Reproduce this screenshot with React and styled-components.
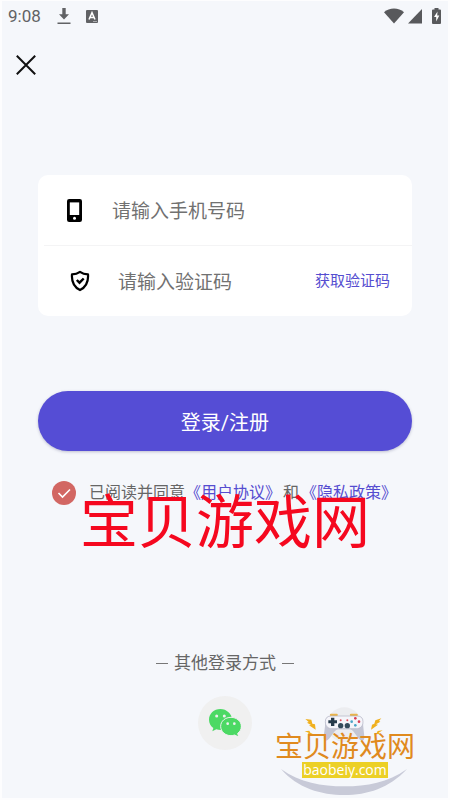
import React, { useState } from 'react';
import styled, { createGlobalStyle } from 'styled-components';

function App() {
  const [phone, setPhone] = useState('');
  const [code, setCode] = useState('');
  const [agreed, setAgreed] = useState(true);

  return (
    <Page>
      <GlobalStyle />

      <StatusBar>
        <Clock>9:08</Clock>
        <DownloadIcon />
        <KeyboardIcon />
        <Signals>
          <WifiIcon />
          <CellIcon />
          <BatteryIcon />
        </Signals>
      </StatusBar>

      <NavBar>
        <CloseButton type="button" aria-label="关闭">
          <CloseIcon />
        </CloseButton>
      </NavBar>

      <Form onSubmit={e => e.preventDefault()}>
        <Fields>
          <Field>
            <IconLabel htmlFor="phone" aria-label="手机号码"><PhoneIcon /></IconLabel>
            <Input
              id="phone"
              type="tel"
              placeholder="请输入手机号码"
              value={phone}
              onChange={e => setPhone(e.target.value)}
            />
          </Field>

          <Field $divided>
            <IconLabel htmlFor="code" aria-label="验证码"><ShieldIcon /></IconLabel>
            <Input
              id="code"
              type="text"
              placeholder="请输入验证码"
              value={code}
              onChange={e => setCode(e.target.value)}
            />
            <CodeButton type="button">获取验证码</CodeButton>
          </Field>
        </Fields>

        <SubmitButton type="submit">登录/注册</SubmitButton>

        <Agreement>
          <Checkbox>
            <input
              id="agree"
              type="checkbox"
              checked={agreed}
              onChange={e => setAgreed(e.target.checked)}
            />
            <svg width="24" height="24" viewBox="0 0 24 24" fill="none">
              <path d="M6.500 12l4 4 7.500-7.500" stroke="#fff" strokeWidth="1.600" />
            </svg>
          </Checkbox>
          <p>
            <label htmlFor="agree">已阅读并同意</label>
            <a href="#terms">《用户协议》</a>
            <span>和</span>
            <a href="#privacy">《隐私政策》</a>
          </p>
          <Watermark>宝贝游戏网</Watermark>
        </Agreement>
      </Form>

      <OtherLogin>
        <OtherTitle>
          <i />其他登录方式<i />
        </OtherTitle>
        <WechatButton type="button" aria-label="微信登录">
          <WechatIcon />
        </WechatButton>
      </OtherLogin>

      <SiteLogo>
        <LogoArt />
        <LogoName>宝贝游戏网</LogoName>
        <LogoUrl>baobeiy.com</LogoUrl>
      </SiteLogo>
    </Page>
  )
}

export default App;

const DownloadIcon = () => (
  <svg width="14" height="18" viewBox="0 0 14 18" fill="#616265">
    <path d="M5.300 1h3.400v6.300h3.300L7 12.500 2 7.300h3.300zM.5 15.500h13V17H.5z" />
  </svg>
)

const KeyboardIcon = () => (
  <svg width="12" height="14" viewBox="0 0 12 14">
    <rect y="1" width="12" height="13" rx="1" fill="#616265" />
    <path d="M3 10.500L6 3.600l3 6.900M4 8.500h4" fill="none" stroke="#fff" strokeWidth="1.500" />
    <path d="M7 12.500h4" stroke="#aaabae" strokeWidth="1" />
  </svg>
)

const WifiIcon = () => (
  <svg width="20" height="16" viewBox="0 0 20 16" fill="#58595c">
    <path d="M0 4.200Q4.300.6 10 .6t10 3.600L10 15.600z" />
  </svg>
)

const CellIcon = () => (
  <svg width="14" height="16" viewBox="0 0 14 16" fill="#58595c">
    <path d="M14 1v14.500H0z" />
  </svg>
)

const BatteryIcon = () => (
  <svg width="9" height="16" viewBox="0 0 9 16">
    <path d="M2.500 0h4v1.500H8q1 0 1 1V15q0 1-1 1H1q-1 0-1-1V2.500q0-1 1-1h1.500z" fill="#58595c" />
    <path d="M5.500 3.500L2 9h2.200v4.500L7.300 7.500H5.200z" fill="#fff" />
  </svg>
)

const CloseIcon = () => (
  <svg width="20" height="20" viewBox="0 0 20 20">
    <path d="M.8.800l18.400 18.400M19.200.8L.8 19.200" stroke="#111" strokeWidth="2" />
  </svg>
)

const PhoneIcon = () => (
  <svg width="15" height="23" viewBox="0 0 15 23">
    <rect width="15" height="23" rx="2.200" fill="#000" />
    <rect x="2.800" y="3.400" width="9.400" height="12.600" fill="#fff" />
    <circle cx="7.500" cy="19.300" r="1.500" fill="#fff" />
  </svg>
)

const ShieldIcon = () => (
  <svg width="20" height="22" viewBox="0 0 20 22" fill="none" stroke="#000">
    <path d="M10 1.900q3.300 2.300 8 2.500c.6 7.500-1.800 12.500-8 15.700C3.800 16.900 1.400 11.900 2 4.400q4.700-.2 8-2.500z" strokeWidth="2.200" strokeLinejoin="round" />
    <path d="M6.800 10l2.700 2.700 4.200-4.200" strokeWidth="2.400" />
  </svg>
)

const WechatIcon = () => (
  <svg width="32" height="28" viewBox="0 0 96 84">
    <path d="M34 0C15 0 0 14 0 32c0 10 5 19 13 25l-3 10 12-6c4 1.500 8 2 13 2 19 0 34-14 34-31S53 0 34 0z" fill="#4cd964" />
    <path d="M66 25c17 0 31 12 31 27 0 9-4 16-11 21l3 11-12-6c-4 1-7 2-11 2-17 0-31-12-31-28s14-27 31-27z" fill="#4cd964" stroke="#f0f0f0" strokeWidth="3" />
    <g fill="#f0f0f0">
      <circle cx="23" cy="21" r="4.500" />
      <circle cx="46" cy="21" r="4.500" />
      <circle cx="56" cy="44" r="4" />
      <circle cx="76" cy="44" r="4" />
    </g>
  </svg>
)

const LogoArt = () => (
  <svg width="160" height="100" viewBox="0 0 480 300">
    <circle cx="238" cy="74" r="52" fill="#ecedf0" />
    <path d="M48 207C105 248 170 259 238 259s130-11 188-52c-54 58-118 78-188 78S98 265 48 207z" fill="#c8cad8" />
    {/* gamepad */}
    <path d="M198 45h17M258 45h17" stroke="#e9b44b" strokeWidth="7" strokeLinecap="round" />
    <path d="M181 65q0-17 18-17h77q18 0 18 17c0 16 4 36 4 50q-2 11-12 5c-12-9-18-28-30-32h-38c-12 4-18 23-30 32q-10 6-12-5c0-14 5-34 5-50z" fill="#c4c6d4" />
    <path d="M181 65q0-17 18-17h77q18 0 18 17c0 15-9 21-20 21h-73c-13 0-20-8-20-21z" fill="#f5f5fa" stroke="#b0b2c2" strokeWidth="2" />
    <path d="M198 53h10v8h8v9h-8v8h-10v-8h-8v-9h8z" fill="#263b4b" />
    <circle cx="227" cy="77" r="8" fill="#344b5b" />
    <circle cx="247" cy="77" r="8" fill="#344b5b" />
    <circle cx="227" cy="61" r="3" fill="#e24e5a" />
    <circle cx="247" cy="61" r="3" fill="#e24e5a" />
    <circle cx="271" cy="55" r="4" fill="#d93c54" />
    <circle cx="282" cy="65" r="4" fill="#d93c54" />
    <circle cx="271" cy="76" r="4" fill="#4ba5c7" />
    <circle cx="260" cy="65" r="4" fill="#4ba5c7" />
    {/* sparks */}
    <g fill="#f0b01e">
      <path d="M121 57l18 2 3 12 8 2 2 16-20-13 6-1-12-7 5-2z" />
      <path d="M119 94l14-2 3 6 9 5-16-1 2-4z" />
      <path d="M349 55l-18 6-3 10-7 3-3 15 21-15-6-1 13-8-4-2z" />
      <path d="M353 91l-15 2-3 6-9 4 17-1-2-4z" />
    </g>
  </svg>
)

const GlobalStyle = createGlobalStyle`
  * {
    box-sizing: border-box;
  }

  body {
    margin: 0;
    font-family: Roboto, "Noto Sans CJK SC", sans-serif;
    color: #666;
    background: #fff;
  }

  button, input {
    font-family: inherit;
    border: none;
    padding: 0;
    background: transparent;
  }

  button {
    cursor: pointer;
  }

  svg {
    display: block;
  }
`

const Page = styled.main`
  position: relative;
  min-height: 100vh;
  display: flex;
  flex-direction: column;
  background: #f5f7fb;
  border: 2px solid #fdfdfe;
  border-top-width: 1px;
  overflow: hidden;
`

const StatusBar = styled.header`
  display: flex;
  align-items: center;
  height: 29px;
  padding: 0 7px 0 6px;
`

const Clock = styled.span`
  margin-right: 16px;
  font-size: 17px;
  line-height: 20px;
  color: #616265;

  & + svg {
    margin-right: 15px;
  }
`

const Signals = styled.div`
  display: flex;
  align-items: center;
  gap: 4px;
  margin-left: auto;

  svg:last-child {
    margin-left: 6px;
  }
`

const NavBar = styled.nav`
  display: flex;
  align-items: center;
  height: 70px;
  padding: 0 14px;
`

const CloseButton = styled.button`
  width: 20px;
  height: 20px;
`

const Form = styled.form`
  padding: 75px 36px 0;
`

const Fields = styled.div`
  border-radius: 10px;
  background: #fff;
`

const Field = styled.div`
  display: flex;
  align-items: center;
  height: ${props => props.$divided ? '71px' : '70px'};
  margin-left: ${props => props.$divided ? '6px' : '0'};
  padding: 0 22px 0 24px;
  border-top: ${props => props.$divided ? '1px solid #f4f4f5' : 'none'};
`

const IconLabel = styled.label`
  display: flex;
  justify-content: center;
  flex: none;
  width: 24px;
  margin-right: 26px;
`

const Input = styled.input`
  flex: 1;
  min-width: 0;
  height: 42px;
  padding-top: 2px;
  font-size: 19px;
  color: #333;
  outline: none;

  &::placeholder {
    color: #717171;
    opacity: 1;
  }
`

const CodeButton = styled.button`
  flex: none;
  font-size: 15px;
  line-height: 20px;
  color: #554dd0;
`

const SubmitButton = styled.button`
  display: block;
  width: 100%;
  height: 60px;
  margin-top: 75px;
  border-radius: 30px;
  font-size: 20px;
  color: #fff;
  background: #554dd5;
  box-shadow: 0 1px 3px rgba(60, 60, 110, 0.3);
`

const Agreement = styled.div`
  position: relative;
  display: flex;
  align-items: center;
  height: 24px;
  margin-top: 30px;
  padding-left: 14px;

  p {
    margin: 0 0 0 13px;
    font-size: 16px;
    line-height: 24px;
    white-space: nowrap;
  }

  p span {
    padding: 0 2px;
  }

  a {
    color: #554dd0;
    text-decoration: none;
  }
`

const Checkbox = styled.span`
  display: grid;
  flex: none;

  input, svg {
    grid-area: 1 / 1;
  }

  input {
    appearance: none;
    width: 24px;
    height: 24px;
    margin: 0;
    border-radius: 50%;
    background: #d26763;
  }

  svg {
    pointer-events: none;
  }

  input:not(:checked) + svg {
    display: none;
  }
`

const Watermark = styled.div`
  position: absolute;
  top: 10px;
  left: 0;
  right: 0;
  text-align: center;
  font-size: 58px;
  line-height: 64px;
  color: #f5081f;
  pointer-events: none;
`

const OtherLogin = styled.section`
  display: flex;
  flex-direction: column;
  align-items: center;
  margin-top: 146px;
`

const OtherTitle = styled.h2`
  display: flex;
  align-items: center;
  gap: 6px;
  margin: 0;
  font-size: 17px;
  font-weight: 400;
  line-height: 24px;

  i {
    width: 12px;
    height: 1px;
    background: #777;
  }
`

const WechatButton = styled.button`
  display: grid;
  place-items: center;
  width: 54px;
  height: 54px;
  margin-top: 21px;
  border-radius: 50%;
  background: #f0f0f0;
`

const SiteLogo = styled.aside`
  position: absolute;
  right: 23px;
  bottom: -2px;
  display: flex;
  flex-direction: column;
  align-items: center;
  width: 160px;
  height: 100px;
  padding-top: 34px;

  svg {
    position: absolute;
    top: 0;
    left: 0;
  }
`

const LogoName = styled.strong`
  position: relative;
  font-size: 28px;
  font-weight: 400;
  line-height: 28px;
  color: #e08a1e;
`

const LogoUrl = styled.span`
  position: relative;
  width: 86px;
  text-align: center;
  font-family: "Open Sans", sans-serif;
  font-size: 14px;
  line-height: 16px;
  color: #fff;
  background: #ecd026;
`
